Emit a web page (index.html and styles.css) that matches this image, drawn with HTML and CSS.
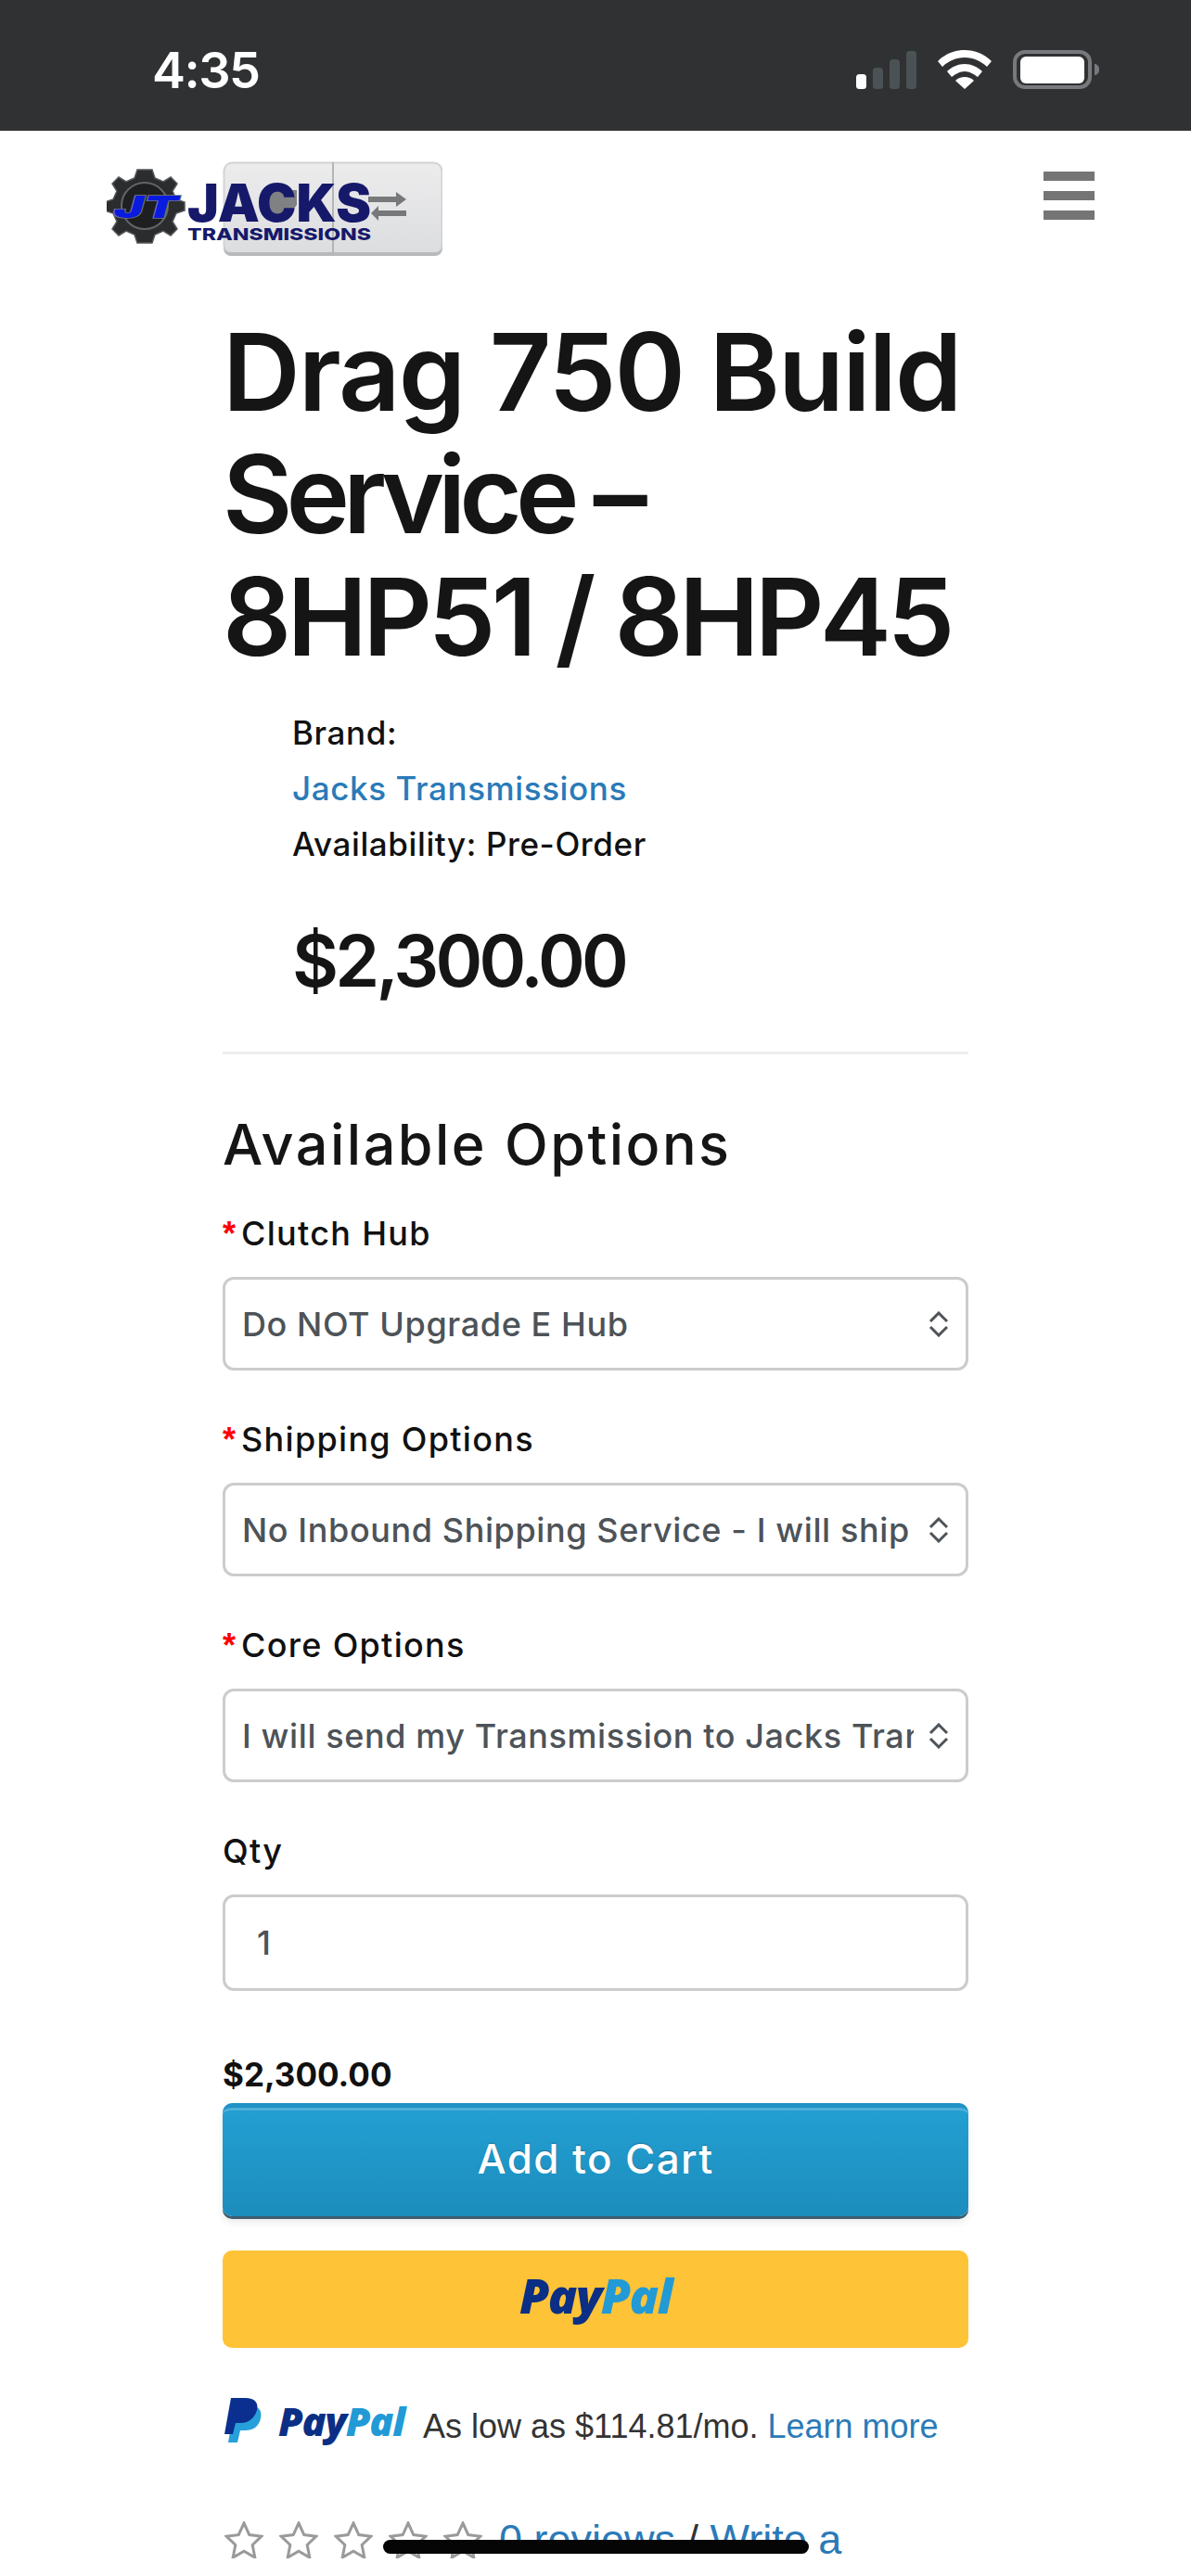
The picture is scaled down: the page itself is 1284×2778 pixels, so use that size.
FILE: index.html
```html
<!DOCTYPE html>
<html lang="en">
<head>
<meta charset="utf-8">
<title>Drag 750 Build Service</title>
<link rel="stylesheet" href="styles.css">
</head>
<body>
<div class="status">
  <span class="time">4:35</span>
  <div class="status-icons">
    <svg class="signal" width="65" height="41" viewBox="0 0 65 41"><rect x="0" y="25" width="11" height="16" rx="3.500" fill="#fff"/><rect x="18" y="18" width="11" height="23" rx="3.500" fill="#4b5256"/><rect x="36" y="9" width="11" height="32" rx="3.500" fill="#4b5256"/><rect x="54" y="0" width="11" height="41" rx="3.500" fill="#4b5256"/></svg>
    <svg class="wifi" width="58" height="42" viewBox="0 0 58 42"><path d="M29 0C18 0 8 4 0 12l5 6c6-6 15-10 24-10s18 4 24 10l5-6C50 4 40 0 29 0Z" fill="#fff"/><path d="M29 15c-7 0-14 3-19 8l5 6c4-3 9-6 14-6s10 3 14 6l5-6c-5-5-12-8-19-8Z" fill="#fff"/><path d="M29 29c-4 0-7 1-10 4l10 9 10-9c-3-3-6-4-10-4Z" fill="#fff"/></svg>
    <svg class="battery" width="94" height="42" viewBox="0 0 94 42"><rect x="2" y="2" width="81" height="38" rx="11" fill="none" stroke="#77797c" stroke-width="4"/><rect x="8" y="7" width="69" height="29" rx="6" fill="#fff"/><path d="M88 15c3 0 5 2.500 5 6s-2 6-5 6Z" fill="#77797c"/></svg>
  </div>
</div>
<header class="site-header">
  <svg class="logo" width="362" height="110" viewBox="0 0 362 110" role="img" aria-label="Jacks Transmissions">
    <defs><linearGradient id="plate" x1="0" y1="0" x2="0" y2="1"><stop offset="0" stop-color="#ececed"/><stop offset="1" stop-color="#dcdddf"/></linearGradient></defs>
    <rect x="126.500" y="1.500" width="235" height="98" rx="9" fill="url(#plate)" stroke="#d2d3d5" stroke-width="2"/>
    <path d="M126 92v2a8 8 0 0 0 8 8h220a8 8 0 0 0 8-8v-2a8 8 0 0 1-8 6H134a8 8 0 0 1-8-6Z" fill="#b8b9bb"/>
    <rect x="243" y="1" width="2" height="100" fill="#b4b5b7"/>
    <path d="M165 44a18 14 0 0 1 20-13h20v16l-14 18h-12l-14-14Z" fill="#808183"/>
    <path d="M282 38h30v-5l11 8-11 8v-5h-30Z" fill="#77787a"/>
    <path d="M323 53v6h-30v5l-8-8 8-8v5Z" fill="#77787a"/>
    <path d="M41 9l8 0 3 9 9 4 8-5 7 7-5 8 4 9 9 3v9l-9 3-4 9 5 8-7 7-8-5-9 4-3 9H33l-3-9-9-4-8 5-7-7 5-8-4-9-9-3v-9l9-3 4-9-5-8 7-7 8 5 9-4 3-9Z" fill="#2b2c2e" stroke="#55575a" stroke-width="1.500"/>
    <circle cx="41" cy="48" r="25" fill="#1e1f21" stroke="#626467" stroke-width="2"/>
    <text class="logo-mark" x="8" y="61" textLength="69" lengthAdjust="spacingAndGlyphs">JT</text>
    <text class="logo-big" x="87" y="65" textLength="198" lengthAdjust="spacingAndGlyphs">JACKS</text>
    <text class="logo-small" x="87" y="85" textLength="198" lengthAdjust="spacingAndGlyphs">TRANSMISSIONS</text>
  </svg>
  <div class="burger"><span></span><span></span><span></span></div>
</header>
<main class="product">
  <h1><span class="line-a">Drag 750 Build</span> <span class="line-b">Service –</span> <span class="line-c">8HP51 / 8HP45</span></h1>
  <ul class="meta">
    <li>Brand:</li>
    <li><a href="#">Jacks Transmissions</a></li>
    <li>Availability: Pre-Order</li>
  </ul>
  <div class="price">$2,300.00</div>
  <hr class="rule">
  <h2>Available Options</h2>
  <div class="field">
    <label class="required">Clutch Hub</label>
    <div class="select-wrap">
      <select><option>Do NOT Upgrade E Hub</option></select>
      <svg class="chev" width="24" height="28" viewBox="0 0 24 28"><path d="M3 11l9-9 9 9M3 17l9 9 9-9" fill="none" stroke="#4d5358" stroke-width="3"/></svg>
    </div>
  </div>
  <div class="field">
    <label class="required">Shipping Options</label>
    <div class="select-wrap">
      <select><option>No Inbound Shipping Service - I will ship my transmission</option></select>
      <svg class="chev" width="24" height="28" viewBox="0 0 24 28"><path d="M3 11l9-9 9 9M3 17l9 9 9-9" fill="none" stroke="#4d5358" stroke-width="3"/></svg>
    </div>
  </div>
  <div class="field">
    <label class="required">Core Options</label>
    <div class="select-wrap">
      <select><option>I will send my Transmission to Jacks Transmissions</option></select>
      <svg class="chev" width="24" height="28" viewBox="0 0 24 28"><path d="M3 11l9-9 9 9M3 17l9 9 9-9" fill="none" stroke="#4d5358" stroke-width="3"/></svg>
    </div>
  </div>
  <div class="field">
    <label>Qty</label>
    <input class="qty" type="text" value="1">
  </div>
  <div class="total">$2,300.00</div>
  <button class="cart" type="button">Add to Cart</button>
  <button class="paypal" type="button"><span class="pp"><span class="pay">Pay</span><span class="pal">Pal</span></span></button>
  <div class="credit">
    <svg class="pp-mark" width="42" height="48" viewBox="0 0 42 48"><path d="M11 8h16c9 0 14 5 12 14s-8 13-17 13h-5l-3 13H4Z" fill="#27a0da"/><path d="M7 0h16c9 0 14 5 12 13s-9 14-17 14h-6l-3 12H0Z" fill="#0a2f8f"/></svg>
    <span class="pp small"><span class="pay">Pay</span><span class="pal">Pal</span></span>
    <span class="credit-text">As low as $114.81/mo. <a href="#">Learn more</a></span>
  </div>
  <div class="reviews">
    <div class="stars">
      <svg width="42" height="40" viewBox="0 0 42 40"><path d="M21 2l5.800 12.600 13.200 1.600-9.800 9.300 2.600 13.500L21 32.300 9.200 39l2.600-13.500L2 16.200l13.200-1.600Z" fill="none" stroke="#9a9a9a" stroke-width="3"/></svg>
      <svg width="42" height="40" viewBox="0 0 42 40"><path d="M21 2l5.800 12.600 13.200 1.600-9.800 9.300 2.600 13.500L21 32.300 9.200 39l2.600-13.500L2 16.200l13.200-1.600Z" fill="none" stroke="#9a9a9a" stroke-width="3"/></svg>
      <svg width="42" height="40" viewBox="0 0 42 40"><path d="M21 2l5.800 12.600 13.200 1.600-9.800 9.300 2.600 13.500L21 32.300 9.200 39l2.600-13.500L2 16.200l13.200-1.600Z" fill="none" stroke="#9a9a9a" stroke-width="3"/></svg>
      <svg width="42" height="40" viewBox="0 0 42 40"><path d="M21 2l5.800 12.600 13.200 1.600-9.800 9.300 2.600 13.500L21 32.300 9.200 39l2.600-13.500L2 16.200l13.200-1.600Z" fill="none" stroke="#9a9a9a" stroke-width="3"/></svg>
      <svg width="42" height="40" viewBox="0 0 42 40"><path d="M21 2l5.800 12.600 13.200 1.600-9.800 9.300 2.600 13.500L21 32.300 9.200 39l2.600-13.500L2 16.200l13.200-1.600Z" fill="none" stroke="#9a9a9a" stroke-width="3"/></svg>
    </div>
    <span class="review-links"><a href="#">0 reviews</a> / <a href="#">Write a</a></span>
  </div>
</main>
<div class="home-indicator"></div>
</body>
</html>
```
FILE: styles.css
```css
* { box-sizing: border-box; }
html, body { margin: 0; padding: 0; height: 2778px; overflow: hidden; background: #fff; }
body { font-family: Inter, "Liberation Sans", sans-serif; color: #111; position: relative; }
a { color: #2a7ab8; text-decoration: none; }

.status { height: 141px; background: #303133; display: flex; justify-content: space-between; align-items: flex-start; padding: 54px 98px 0 164px; }
.time { color: #fff; font-size: 54px; font-weight: 600; line-height: 44px; letter-spacing: -1.500px; }
.status-icons { display: flex; align-items: flex-end; gap: 23px; }

.site-header { height: 194px; display: flex; justify-content: space-between; align-items: flex-start; padding: 33px 104px 0 115px; }
.logo-mark { font: italic 900 33px Inter, sans-serif; fill: #0a1be0; stroke: #777a7e; stroke-width: 1.500px; paint-order: stroke; }
.logo-big { font: 900 56px Inter, sans-serif; fill: #16196a; }
.logo-small { font: 800 18px Inter, sans-serif; fill: #16196a; }
.burger { width: 55px; display: flex; flex-direction: column; gap: 11px; padding-top: 11px; }
.burger span { height: 10px; background: #757575; }

.product { width: 804px; margin-left: 240px; }
h1 { margin: 0; font-size: 116px; line-height: 132px; font-weight: 600; color: #151515; white-space: nowrap; }
.line-a, .line-b, .line-c { display: block; }
.line-a { letter-spacing: -1.900px; }
.line-b { letter-spacing: -7px; }
.line-c { letter-spacing: -4.700px; }
.meta { list-style: none; margin: 0; padding: 29px 0 0 75px; font-size: 35px; line-height: 60px; font-weight: 500; letter-spacing: .6px; }
.price { padding: 48px 0 0 75px; font-size: 77px; line-height: 96px; font-weight: 600; letter-spacing: -3.800px; color: #151515; }
.rule { margin: 50px 0 0; border: 0; border-top: 3px solid #eee; }
h2 { margin: 0; padding-top: 59px; font-size: 61px; line-height: 76px; font-weight: 500; letter-spacing: 2.500px; color: #151515; }

.field { margin-top: 33px; }
.field + .field { margin-top: 49px; }
label { display: block; font-size: 36px; line-height: 50px; font-weight: 500; letter-spacing: 1.300px; margin-bottom: 22px; color: #111; }
.required::before { content: "*"; color: #f00; margin-right: 6px; font-family: "Liberation Sans", sans-serif; font-weight: 700; font-size: 36px; line-height: 0; letter-spacing: 0; }
.select-wrap { position: relative; }
select { display: block; width: 100%; height: 101px; border: 3px solid #ccc; border-radius: 12px; background: #fff; appearance: none; -webkit-appearance: none; padding: 0 56px 0 18px; font-family: Inter, sans-serif; font-size: 36px; font-weight: 500; letter-spacing: .6px; color: #4d5358; }
.chev { position: absolute; right: 20px; top: 37px; pointer-events: none; }
.qty { display: block; width: 100%; height: 104px; border: 3px solid #ccc; border-radius: 12px; padding: 0 34px; font-family: Inter, sans-serif; font-size: 36px; font-weight: 500; color: #4d5358; }

.total { margin-top: 71px; font-size: 35px; line-height: 38px; font-weight: 700; }
.cart { display: block; width: 100%; height: 122px; margin-top: 12px; padding: 0 0 8px; border: 0; border-radius: 10px; background: linear-gradient(#239fd2, #1c8dbd); border-top: 5px solid #1f93c6; box-shadow: inset 0 3px 0 #4fb0d9, 0 3px 0 #3e5e6f, 0 7px 8px rgba(0,0,0,.08); color: #fff; font-family: Inter, sans-serif; font-size: 44px; font-weight: 500; letter-spacing: 1.400px; text-shadow: 0 -1px 1px rgba(0,0,0,.25); }
.paypal { display: block; width: 100%; height: 105px; margin-top: 37px; padding: 0 0 10px; border: 0; border-radius: 10px; background: #ffc337; }
.pp { font-family: "Open Sans", sans-serif; font-style: italic; font-weight: 800; font-size: 52px; letter-spacing: -1.500px; }
.pp.small { font-size: 43px; letter-spacing: -1.200px; }
.pay { color: #0b2f85; }
.pal { color: #219ad6; }
.credit { display: flex; align-items: center; margin-top: 54px; padding-left: 2px; height: 48px; }
.pp-mark { margin-right: 16px; }
.credit-text { margin-left: 20px; margin-top: 14px; font-family: "Liberation Sans", sans-serif; font-size: 36px; color: #333; }
.reviews { display: flex; align-items: flex-start; margin-top: 79px; padding-left: 2px; }
.stars { display: flex; gap: 17px; margin-top: 6px; }
.review-links { margin-left: 18px; margin-top: 3px; font-family: "Liberation Sans", sans-serif; font-size: 45px; line-height: 46px; color: #333; white-space: nowrap; }

.home-indicator { position: absolute; left: 413px; top: 2739px; width: 459px; height: 15px; border-radius: 8px; background: #050505; }
```
